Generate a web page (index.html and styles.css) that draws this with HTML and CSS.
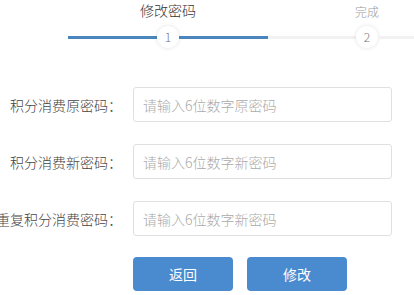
FILE: index.html
```html
<!DOCTYPE html>
<html lang="zh-CN">
<head>
    <meta charset="UTF-8">
    <meta name="viewport" content="width=device-width, initial-scale=1.0">
    <title>修改密码</title>
    <link rel="stylesheet" href="styles.css">
</head>
<body>
    <div class="steps">
        <span class="step-title current">修改密码</span>
        <span class="step-title done">完成</span>
        <span class="bar on b1"></span>
        <span class="dot d1">1</span>
        <span class="bar on b2"></span>
        <span class="bar b3"></span>
        <span class="dot d2">2</span>
        <span class="bar b4"></span>
    </div>
    <form class="form">
        <div class="form-row">
            <label class="label">积分消费原密码：</label>
            <input type="password" placeholder="请输入6位数字原密码">
        </div>
        <div class="form-row">
            <label class="label">积分消费新密码：</label>
            <input type="password" placeholder="请输入6位数字新密码">
        </div>
        <div class="form-row">
            <label class="label">重复积分消费密码：</label>
            <input type="password" placeholder="请输入6位数字新密码">
        </div>
        <div class="actions">
            <button type="button" class="btn">返回</button>
            <button type="submit" class="btn">修改</button>
        </div>
    </form>
</body>
</html>
```
FILE: styles.css
```css
* {
    margin: 0;
    padding: 0;
    box-sizing: border-box;
}
body {
    font-family: "Microsoft YaHei", "Noto Sans CJK SC", "Noto Sans", sans-serif;
    font-weight: 300;
    background: #fff;
    color: #333;
    width: 414px;
    height: 295px;
    overflow: hidden;
}
.steps {
    display: grid;
    grid-template-columns: 68px 89px 22px 89px 88px 22px 1fr;
    grid-template-rows: 20px 22px;
    row-gap: 6px;
    align-items: center;
}
.step-title {
    grid-row: 1;
    justify-self: center;
    white-space: nowrap;
    line-height: 20px;
}
.step-title.current {
    grid-column: 3;
    font-size: 14px;
    color: #333;
}
.step-title.done {
    grid-column: 6;
    font-size: 12px;
    color: #999;
    padding-top: 4px;
}
.bar {
    grid-row: 2;
    height: 3px;
    background: #f2f2f2;
}
.bar.on {
    background: #4a86bd;
}
.b1 { grid-column: 2; }
.b2 { grid-column: 4; }
.b3 { grid-column: 5; }
.b4 { grid-column: 7; }
.dot {
    grid-row: 2;
    width: 22px;
    height: 22px;
    border-radius: 50%;
    background: #fff;
    box-shadow: 0 0 4px rgba(0, 0, 0, 0.12);
    font-size: 12px;
    line-height: 22px;
    text-align: center;
    color: #777;
}
.d1 { grid-column: 3; }
.d2 { grid-column: 6; }
.form {
    margin-top: 39px;
    display: flex;
    flex-direction: column;
    gap: 22px;
}
.form-row {
    display: grid;
    grid-template-columns: 122px 259px;
    column-gap: 11px;
    align-items: center;
    height: 35px;
}
.label {
    display: flex;
    justify-content: flex-end;
    white-space: nowrap;
    font-size: 14px;
    color: #444;
}
input {
    height: 35px;
    padding: 0 9px;
    border: 1px solid #e0e0e0;
    border-radius: 3px;
    font-family: inherit;
    font-weight: 300;
    font-size: 14px;
    color: #333;
    outline: none;
}
input::placeholder {
    color: #aaa;
}
.actions {
    display: flex;
    gap: 14px;
    padding-left: 133px;
    margin-top: -1px;
}
.btn {
    width: 100px;
    height: 34px;
    border: none;
    border-radius: 4px;
    background: #4a8bcf;
    color: #fff;
    font-family: inherit;
    font-weight: 400;
    font-size: 14px;
    cursor: pointer;
}
```
